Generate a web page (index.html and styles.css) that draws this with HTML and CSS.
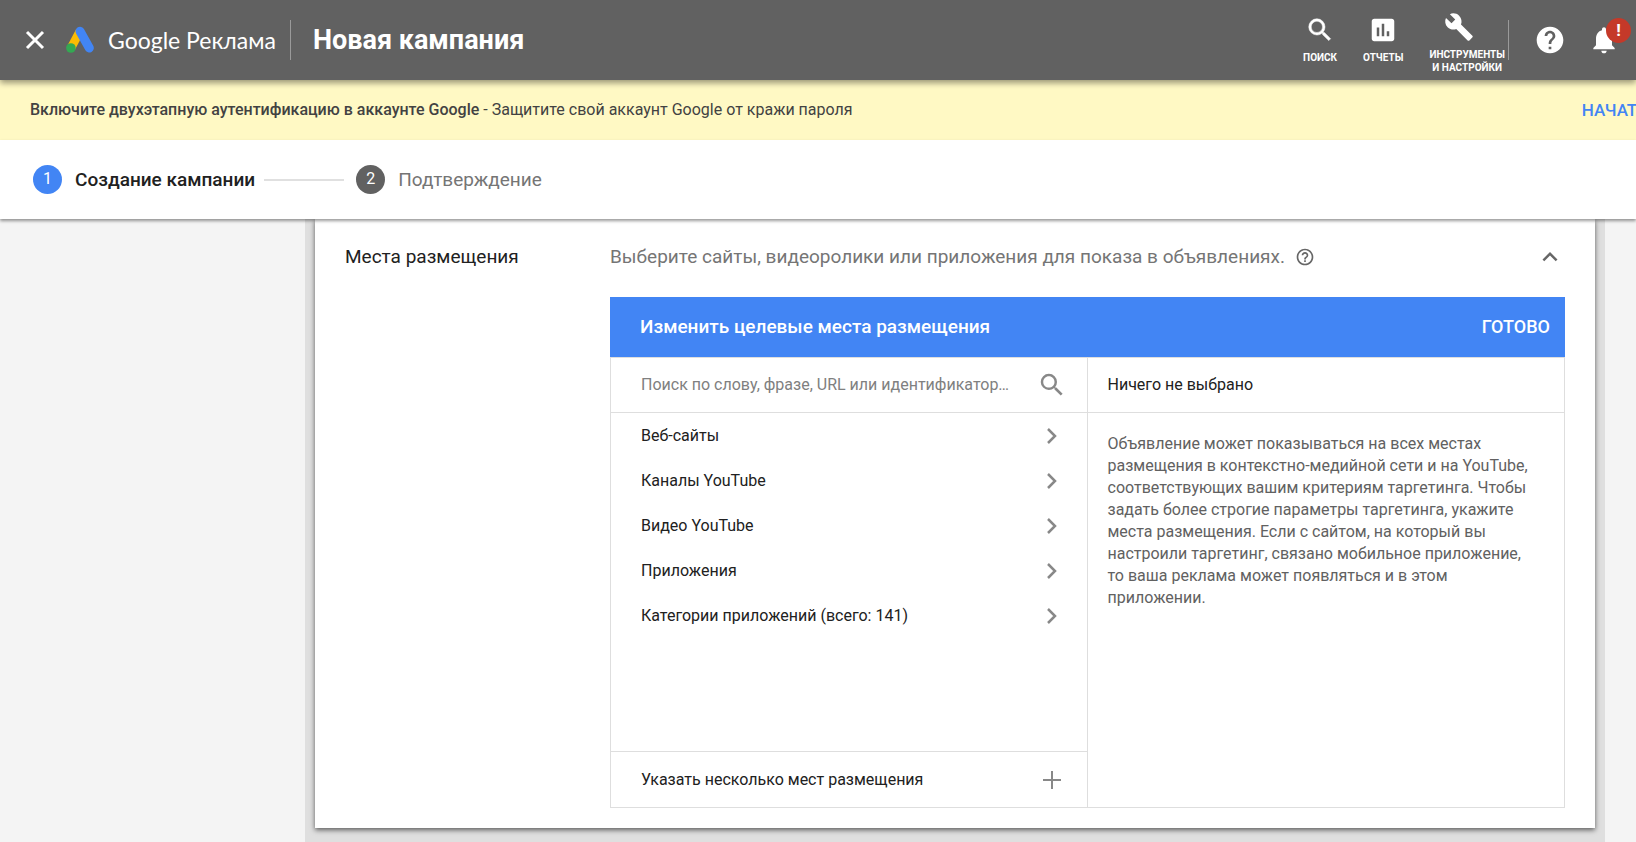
FILE: index.html
```html
<!DOCTYPE html>
<html lang="ru">
<head>
<meta charset="utf-8">
<meta name="viewport" content="width=device-width, initial-scale=1">
<title>Новая кампания</title>
<link rel="stylesheet" href="styles.css">
</head>
<body>
<header class="topbar">
  <button class="icon-button close" aria-label="Закрыть">
    <svg width="28" height="28" viewBox="0 0 28 28"><path d="M6 6l16 16M22 6L6 22" stroke="#fff" stroke-width="3" fill="none"/></svg>
  </button>
  <a class="brand" href="#">
    <svg width="28" height="28" viewBox="0 0 28 28">
      <path d="M14 5L5 22" stroke="#fbbc04" stroke-width="8.600" fill="none"/>
      <path d="M14 5.200L23.300 22" stroke="#4285f4" stroke-width="9" stroke-linecap="round" fill="none"/>
      <circle cx="4.900" cy="22" r="4.800" fill="#34a853"/>
    </svg>
    <span class="brand-name">Google Реклама</span>
  </a>
  <span class="rule"></span>
  <h1 class="page-title">Новая кампания</h1>
  <nav class="tools">
    <button class="tool">
      <svg width="30" height="30" viewBox="0 0 24 24"><path fill="#fff" stroke="#fff" stroke-width=".4" d="M15.500 14h-.79l-.28-.27A6.471 6.471 0 0 0 16 9.500 6.500 6.500 0 1 0 9.500 16c1.610 0 3.090-.59 4.230-1.570l.27.28v.79l5 4.990L20.490 19l-4.990-5zm-6 0C7.010 14 5 11.990 5 9.500S7.010 5 9.500 5 14 7.010 14 9.500 11.990 14 9.500 14z"/></svg>
      <span>ПОИСК</span>
    </button>
    <button class="tool">
      <svg width="30" height="30" viewBox="0 0 24 24"><path fill="#fff" d="M19 3H5c-1.100 0-2 .9-2 2v14c0 1.100.9 2 2 2h14c1.100 0 2-.9 2-2V5c0-1.100-.9-2-2-2zM9 17H7v-7h2v7zm4 0h-2V7h2v10zm4 0h-2v-4h2v4z"/></svg>
      <span>ОТЧЕТЫ</span>
    </button>
    <button class="tool tool-wide">
      <svg width="30" height="30" viewBox="0 0 24 24"><path fill="#fff" d="M22.700 19l-9.100-9.100c.9-2.300.4-5-1.500-6.900-2-2-5-2.400-7.400-1.300L9 6 6 9 1.600 4.700C.4 7.100.9 10.100 2.900 12.100c1.900 1.900 4.600 2.400 6.900 1.500l9.100 9.100c.4.4 1 .4 1.400 0l2.300-2.300c.5-.4.5-1.100.1-1.400z"/></svg>
      <span>ИНСТРУМЕНТЫ<br>И НАСТРОЙКИ</span>
    </button>
  </nav>
  <span class="rule"></span>
  <button class="icon-button help" aria-label="Справка">
    <svg width="32" height="32" viewBox="0 0 24 24"><path fill="#fff" d="M12 2C6.480 2 2 6.480 2 12s4.480 10 10 10 10-4.480 10-10S17.520 2 12 2zm1 17h-2v-2h2v2zm2.070-7.750l-.9.920C13.450 12.900 13 13.500 13 15h-2v-.5c0-1.100.45-2.100 1.170-2.830l1.240-1.260c.37-.36.59-.86.59-1.410 0-1.100-.9-2-2-2s-2 .9-2 2H8c0-2.210 1.790-4 4-4s4 1.790 4 4c0 .88-.36 1.680-.93 2.250z"/></svg>
  </button>
  <button class="icon-button bell" aria-label="Уведомления">
    <svg width="32" height="32" viewBox="0 0 24 24"><path fill="#fff" d="M12 22c1.100 0 2-.9 2-2h-4c0 1.100.9 2 2 2zm6-6v-5c0-3.070-1.640-5.640-4.500-6.320V4c0-.83-.67-1.500-1.500-1.500s-1.500.67-1.500 1.500v.68C7.630 5.360 6 7.920 6 11v5l-2 2v1h16v-1l-2-2z"/></svg>
    <span class="badge">!</span>
  </button>
</header>

<section class="notice">
  <p class="notice-text"><strong>Включите двухэтапную аутентификацию в аккаунте Google</strong> - Защитите свой аккаунт Google от кражи пароля</p>
  <button class="notice-action">НАЧАТЬ</button>
</section>

<ol class="steps">
  <li class="step step-active"><span class="step-number">1</span>Создание кампании</li>
  <li class="step-line" role="presentation"></li>
  <li class="step"><span class="step-number">2</span>Подтверждение</li>
</ol>

<main class="main">
  <div class="backdrop">
    <section class="card">
      <h2 class="card-title">Места размещения</h2>
      <div class="card-body">
        <div class="card-head">
          <span>Выберите сайты, видеоролики или приложения для показа в объявлениях.</span>
          <button class="icon-button" aria-label="Подробнее">
            <svg width="20" height="20" viewBox="0 0 24 24"><path fill="#666" d="M11 18h2v-2h-2v2zm1-16C6.480 2 2 6.480 2 12s4.480 10 10 10 10-4.480 10-10S17.520 2 12 2zm0 18c-4.410 0-8-3.590-8-8s3.590-8 8-8 8 3.590 8 8-3.590 8-8 8zm0-14c-2.210 0-4 1.790-4 4h2c0-1.100.9-2 2-2s2 .9 2 2c0 2-3 1.750-3 5h2c0-2.250 3-2.500 3-5 0-2.210-1.790-4-4-4z"/></svg>
          </button>
          <button class="icon-button collapse" aria-label="Свернуть">
            <svg width="30" height="30" viewBox="0 0 24 24"><path fill="#666" d="M12 8l-6 6 1.410 1.410L12 10.830l4.590 4.580L18 14z"/></svg>
          </button>
        </div>
        <div class="picker">
          <div class="picker-bar">
            <h3 class="picker-title">Изменить целевые места размещения</h3>
            <button class="done">ГОТОВО</button>
          </div>
          <div class="picker-columns">
            <div class="picker-left">
              <div class="search">
                <input class="search-input" type="text" aria-label="Поиск мест размещения" placeholder="Поиск по слову, фразе, URL или идентификатору видео">
                <button class="icon-button" aria-label="Найти">
                  <svg width="30" height="30" viewBox="0 0 24 24"><path fill="#888" d="M15.500 14h-.79l-.28-.27A6.471 6.471 0 0 0 16 9.500 6.500 6.500 0 1 0 9.500 16c1.610 0 3.090-.59 4.230-1.570l.27.28v.79l5 4.990L20.490 19l-4.990-5zm-6 0C7.010 14 5 11.990 5 9.500S7.010 5 9.500 5 14 7.010 14 9.500 11.990 14 9.500 14z"/></svg>
                </button>
              </div>
              <div class="options">
                <button class="option">Веб-сайты<svg width="30" height="30" viewBox="0 0 30 30"><path d="M11 8l7 7-7 7" fill="none" stroke="#888" stroke-width="2.500"/></svg></button>
                <button class="option">Каналы YouTube<svg width="30" height="30" viewBox="0 0 30 30"><path d="M11 8l7 7-7 7" fill="none" stroke="#888" stroke-width="2.500"/></svg></button>
                <button class="option">Видео YouTube<svg width="30" height="30" viewBox="0 0 30 30"><path d="M11 8l7 7-7 7" fill="none" stroke="#888" stroke-width="2.500"/></svg></button>
                <button class="option">Приложения<svg width="30" height="30" viewBox="0 0 30 30"><path d="M11 8l7 7-7 7" fill="none" stroke="#888" stroke-width="2.500"/></svg></button>
                <button class="option">Категории приложений (всего: 141)<svg width="30" height="30" viewBox="0 0 30 30"><path d="M11 8l7 7-7 7" fill="none" stroke="#888" stroke-width="2.500"/></svg></button>
              </div>
              <button class="option option-bulk">Указать несколько мест размещения<svg width="30" height="30" viewBox="0 0 30 30"><path d="M15 6v18M6 15h18" fill="none" stroke="#888" stroke-width="2"/></svg></button>
            </div>
            <div class="picker-right">
              <div class="selected">Ничего не выбрано</div>
              <p class="hint">Объявление может показываться на всех местах размещения в контекстно-медийной сети и на YouTube, соответствующих вашим критериям таргетинга. Чтобы задать более строгие параметры таргетинга, укажите места размещения. Если с сайтом, на который вы настроили таргетинг, связано мобильное приложение, то ваша реклама может появляться и в этом приложении.</p>
            </div>
          </div>
        </div>
      </div>
    </section>
  </div>
</main>
</body>
</html>
```
FILE: styles.css
```css
* {
  box-sizing: border-box;
}

body {
  margin: 0;
  min-height: 100vh;
  display: flex;
  flex-direction: column;
  overflow-x: hidden;
  background: #f4f4f4;
  color: #212121;
  font: 16px/22px Roboto, sans-serif;
}

h1, h2, h3, p, ol {
  margin: 0;
  padding: 0;
}

button {
  padding: 0;
  border: 0;
  background: none;
  color: inherit;
  font: inherit;
  cursor: pointer;
}

svg {
  display: block;
  flex: none;
}

.topbar {
  position: relative;
  z-index: 2;
  display: flex;
  align-items: center;
  height: 80px;
  padding: 0 16px 0 21px;
  background: #616161;
  color: #fff;
  box-shadow: 0 3px 6px rgba(0, 0, 0, 0.4);
}

.brand {
  display: flex;
  align-items: center;
  gap: 14px;
  margin: 0 14px 0 17px;
  color: #fff;
  text-decoration: none;
}

.brand-name {
  font: 23px/32px Lato, Roboto, sans-serif;
  white-space: nowrap;
}

.rule {
  width: 1px;
  height: 40px;
  background: #9a9a9a;
}

.page-title {
  margin-left: 22px;
  font-size: 27px;
  line-height: 36px;
  font-weight: 700;
  white-space: nowrap;
}

.tools {
  display: flex;
  align-items: center;
  gap: 26px;
  height: 80px;
  margin: 0 3px 0 auto;
}

.tool {
  display: flex;
  flex-direction: column;
  align-items: center;
  gap: 6px;
  padding-bottom: 2px;
  font-size: 10px;
  line-height: 13px;
  font-weight: 700;
}

.tool-wide {
  padding: 5px 0 0;
}

.tool-wide svg {
  margin-right: 16px;
}

.help {
  margin-left: 25px;
}

.bell {
  position: relative;
  margin-left: 22px;
}

.badge {
  position: absolute;
  top: -6px;
  left: 18px;
  width: 25px;
  height: 25px;
  border-radius: 50%;
  background: #c53929;
  font-size: 17px;
  line-height: 25px;
  font-weight: 700;
}

.notice {
  display: flex;
  align-items: center;
  justify-content: space-between;
  height: 60px;
  padding-left: 30px;
  overflow: hidden;
  background: #fff9c4;
  color: #424242;
}

.notice-text {
  white-space: nowrap;
}

.notice-text strong {
  font-weight: 500;
}

.notice-action {
  margin-right: -12px;
  color: #4285f4;
  font-size: 17px;
  font-weight: 500;
}

.steps {
  position: relative;
  z-index: 1;
  display: flex;
  align-items: center;
  gap: 9px;
  height: 79px;
  padding-left: 33px;
  background: #fff;
  color: #757575;
  font-size: 19px;
  list-style: none;
  box-shadow: 0 2px 3px rgba(0, 0, 0, 0.4);
}

.step {
  display: flex;
  align-items: center;
  gap: 13px;
}

.step-active {
  color: #212121;
  font-weight: 500;
}

.step-number {
  width: 29px;
  height: 29px;
  border-radius: 50%;
  background: #616161;
  color: #fff;
  font-size: 16px;
  line-height: 28px;
  font-weight: 400;
  text-align: center;
}

.step-active .step-number {
  background: #4285f4;
}

.step-line {
  width: 80px;
  height: 2px;
  margin-right: 3px;
  background: #e0e0e0;
}

.main {
  flex: 1;
  display: flex;
  padding: 0 31px 0 305px;
}

.backdrop {
  flex: 1;
  padding: 0 10px 14px;
  background: #dfdfdf;
}

.card {
  display: grid;
  grid-template-columns: 265px 1fr;
  padding: 0 30px 20px;
  background: #fff;
  box-shadow: 0 2px 5px rgba(0, 0, 0, 0.6);
}

.card-title {
  font-size: 19px;
  line-height: 76px;
  font-weight: 400;
}

.card-head {
  display: flex;
  align-items: center;
  gap: 10px;
  height: 78px;
  padding-bottom: 2px;
  color: #757575;
  font-size: 19px;
}

.collapse {
  margin-left: auto;
}

.picker-bar {
  display: flex;
  align-items: center;
  justify-content: space-between;
  height: 60px;
  padding: 0 15px 0 30px;
  background: #4285f4;
  color: #fff;
}

.picker-title,
.done {
  font-size: 19px;
  line-height: 24px;
  font-weight: 500;
}

.done {
  font-size: 18px;
}

.picker-columns {
  display: grid;
  grid-template-columns: 1fr 1fr;
  border: 1px solid #dedede;
}

.picker-left {
  display: flex;
  flex-direction: column;
  border-right: 1px solid #dedede;
}

.search {
  display: flex;
  align-items: center;
  gap: 20px;
  height: 55px;
  padding: 0 20px 0 30px;
  border-bottom: 1px solid #dedede;
}

.search-input {
  flex: 1;
  min-width: 0;
  padding: 0;
  border: 0;
  outline: 0;
  background: none;
  color: inherit;
  font: inherit;
  text-overflow: ellipsis;
}

.search-input::placeholder {
  color: #808080;
  opacity: 1;
}

.options {
  flex: 1;
  min-height: 338px;
}

.option {
  display: flex;
  align-items: center;
  justify-content: space-between;
  width: 100%;
  height: 45px;
  padding: 0 20px 0 30px;
  text-align: left;
}

.option-bulk {
  height: 56px;
  border-top: 1px solid #dedede;
}

.selected {
  height: 55px;
  padding: 0 20px;
  border-bottom: 1px solid #dedede;
  line-height: 54px;
}

.hint {
  padding: 20px 30px 20px 20px;
  color: #616161;
}
```
